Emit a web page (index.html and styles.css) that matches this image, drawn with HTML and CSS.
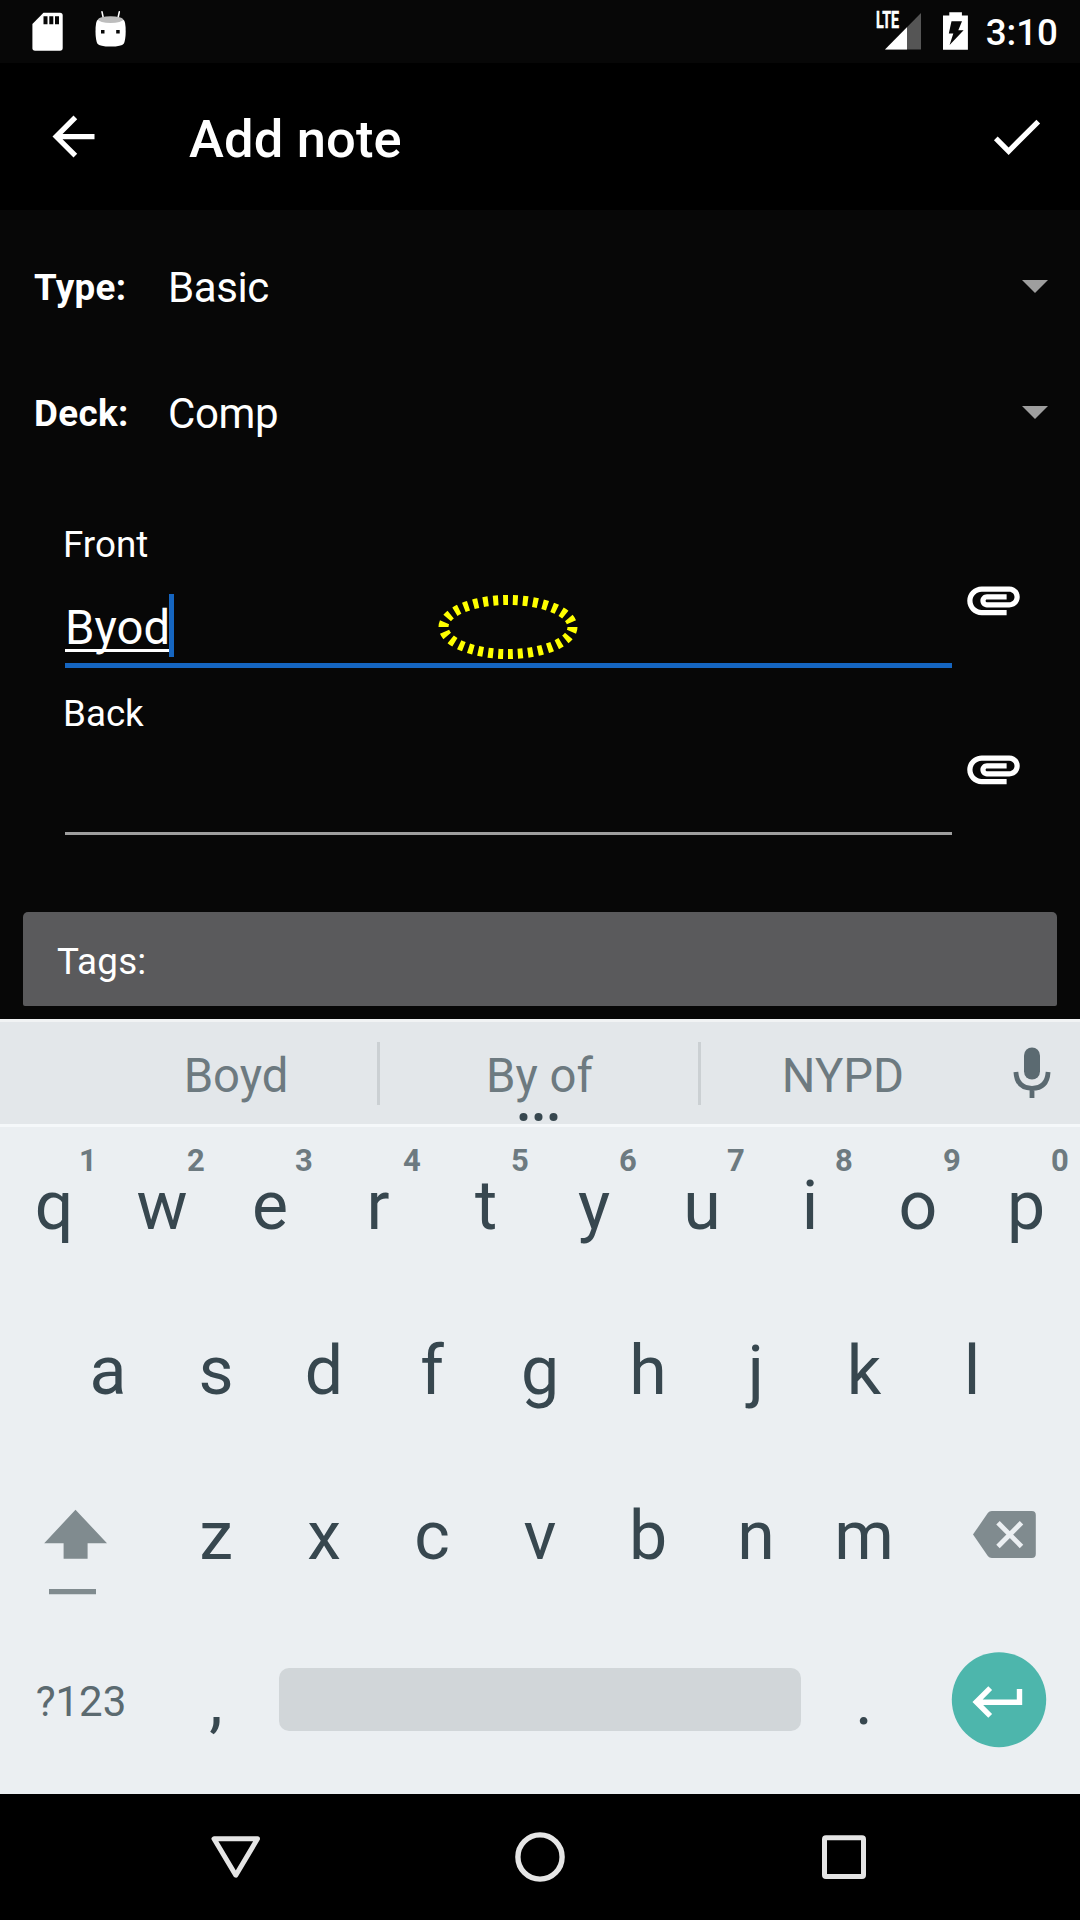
FILE: index.html
```html
<!DOCTYPE html>
<html lang="en">
<head>
<meta charset="utf-8">
<title>Add note</title>
<link rel="stylesheet" href="styles.css">
</head>
<body>
<div class="screen">
  <div class="status">
    <svg class="status-left" width="100" height="63" viewBox="30 0 100 63">
      <path fill="#fff" d="M43.500 12.700H60a2.700 2.700 0 0 1 2.700 2.700V48a2.700 2.700 0 0 1-2.700 2.700H35.100a2.700 2.700 0 0 1-2.700-2.700V24z"/>
      <path fill="#070707" d="M43.500 16.300h4v7.900h-4zM49.300 16.300h4v7.900h-4zM55 16.300h4v7.900h-4z"/>
      <path stroke="#fff" stroke-width="1.600" stroke-linecap="round" d="M102 11.800l1.500 7M119.300 11.800l-1.500 7"/>
      <path fill="#fff" d="M98 19.500q12.600-3 25.200 0q2.600 1 2.500 12.500q-.200 9-2 11.700q-2 2.800-13.100 2.800t-13.100-2.800q-1.800-2.700-2-11.700q-.100-11.500 2.500-12.500z"/>
      <ellipse cx="110.600" cy="19.600" rx="12.500" ry="3.300" fill="#bdbdbd"/>
      <path fill="#070707" d="M101 30h3.500v3.500H101zM116.200 30h3.500v3.500h-3.500z"/>
    </svg>
    <div class="status-right">
      <div class="signal">
        <svg width="46" height="63" viewBox="876 0 46 63">
          <path fill="#555" d="M921 13v36.500h-36z"/>
          <path fill="#fff" d="M907 27.200v22.300h-22z"/>
        </svg>
        <span class="lte">LTE</span>
      </div>
      <svg class="battery" width="25" height="63" viewBox="943 0 25 63">
        <path fill="#fff" d="M943 15.500h6.300v-3.300h12.600v3.300h6v34.200H943z"/>
        <path fill="#070707" d="M951.500 21.200h10.500l-3.700 9.100h5.300l-14 14.800 3.700-11.500h-4.500z"/>
      </svg>
      <span class="clock">3:10</span>
    </div>
  </div>

  <div class="appbar">
    <svg width="63" height="63" viewBox="0 0 24 24"><path fill="#fff" d="M20 11H7.830l5.590-5.590L12 4l-8 8 8 8 1.410-1.410L7.830 13H20v-2z"/></svg>
    <h1 class="title">Add note</h1>
    <svg width="63" height="63" viewBox="0 0 24 24"><path fill="#fff" d="M9 16.170L4.830 12l-1.420 1.410L9 19 21 7l-1.410-1.410z"/></svg>
  </div>

  <div class="form">
    <div class="picker"><b class="picker-label">Type:</b><span class="picker-value">Basic</span><span class="caret"></span></div>
    <div class="picker"><b class="picker-label">Deck:</b><span class="picker-value">Comp</span><span class="caret"></span></div>

    <div class="fields">
      <div class="field">
        <div class="field-main">
          <div class="field-label">Front</div>
          <div class="input focused"><span class="typed">Byod</span><span class="cursor"></span>
            <svg class="marker" width="144" height="70" viewBox="0 0 144 70"><ellipse cx="72" cy="35" rx="64.500" ry="27" fill="none" stroke="#ff0" stroke-width="10" pathLength="300" stroke-dasharray="5 5"/></svg>
          </div>
        </div>
        <svg class="clip" width="63" height="63" viewBox="0 0 24 24"><path fill="#fff" d="M2 12.500C2 9.460 4.460 7 7.500 7H18c2.210 0 4 1.790 4 4s-1.790 4-4 4H9.500C8.120 15 7 13.880 7 12.500S8.120 10 9.500 10H17v2H9.410c-.550 0-.550 1 0 1H18c1.100 0 2-.900 2-2s-.900-2-2-2H7.500C5.570 9 4 10.570 4 12.500S5.570 16 7.500 16H17v2H7.500C4.460 18 2 15.540 2 12.500z"/></svg>
      </div>
      <div class="field">
        <div class="field-main">
          <div class="field-label">Back</div>
          <div class="input"></div>
        </div>
        <svg class="clip" width="63" height="63" viewBox="0 0 24 24"><path fill="#fff" d="M2 12.500C2 9.460 4.460 7 7.500 7H18c2.210 0 4 1.790 4 4s-1.790 4-4 4H9.500C8.120 15 7 13.880 7 12.500S8.120 10 9.500 10H17v2H9.410c-.550 0-.550 1 0 1H18c1.100 0 2-.900 2-2s-.900-2-2-2H7.500C5.570 9 4 10.570 4 12.500S5.570 16 7.500 16H17v2H7.500C4.460 18 2 15.540 2 12.500z"/></svg>
      </div>
    </div>

    <div class="tags">Tags:</div>
  </div>

  <div class="keyboard">
    <div class="suggestions">
      <span class="word">Boyd</span>
      <span class="word center">By of
        <svg class="more" width="40" height="10" viewBox="0 0 40 10"><g fill="#37474f"><circle cx="4.500" cy="5" r="4"/><circle cx="19.500" cy="5" r="4"/><circle cx="34.500" cy="5" r="4"/></g></svg>
      </span>
      <span class="word">NYPD</span>
      <svg class="mic" width="38" height="52" viewBox="0 0 38 52"><rect x="11" y="0.500" width="16" height="32" rx="8" fill="#5b6a71"/><path fill="none" stroke="#5b6a71" stroke-width="4.800" d="M2.900 25q1 16.300 16.100 16.300T35.100 25M19 41v10"/></svg>
    </div>
    <div class="keys">
      <div class="row">
        <span class="key">q<i class="hint">1</i></span><span class="key">w<i class="hint">2</i></span><span class="key">e<i class="hint">3</i></span><span class="key">r<i class="hint">4</i></span><span class="key">t<i class="hint">5</i></span><span class="key">y<i class="hint">6</i></span><span class="key">u<i class="hint">7</i></span><span class="key">i<i class="hint">8</i></span><span class="key">o<i class="hint">9</i></span><span class="key">p<i class="hint">0</i></span>
      </div>
      <div class="row">
        <span class="key">a</span><span class="key">s</span><span class="key">d</span><span class="key">f</span><span class="key">g</span><span class="key">h</span><span class="key">j</span><span class="key">k</span><span class="key">l</span>
      </div>
      <div class="row">
        <svg width="162" height="165" viewBox="0 1457 162 165"><path fill="#808b8f" d="M75.500 1509.800L107 1543.200H87.600v15.600h-24v-15.600H44.200zM49 1589h47v5.200H49z"/></svg>
        <span class="key">z</span><span class="key">x</span><span class="key">c</span><span class="key">v</span><span class="key">b</span><span class="key">n</span><span class="key">m</span>
        <svg width="162" height="165" viewBox="918 1457 162 165"><path fill="#808b8f" d="M973 1534.500l14.800-21.500q1.500-2 4-2h40q4 0 4 4v39q0 4-4 4h-40q-2.500 0-4-2z"/><path stroke="#ebeff2" stroke-width="4.900" d="M998 1522.800l23.500 23.600M1021.500 1522.800l-23.500 23.600"/></svg>
      </div>
      <div class="row">
        <span class="key symbols">?123</span><span class="key">,</span><span class="key space"><span class="spacebar"></span></span><span class="key">.</span>
        <svg width="162" height="165" viewBox="918 1622 162 165"><ellipse cx="999" cy="1699.700" rx="47.200" ry="47.500" fill="#4db6ac"/><path fill="none" stroke="#fff" stroke-width="5.400" d="M990.200 1688.200l-13.900 13.800 13.900 13.800M976 1702.200h43.500v-13.200"/></svg>
      </div>
    </div>
  </div>

  <div class="nav">
    <svg width="304" height="126" viewBox="84.500 1794 304 126"><path fill="none" stroke="#e5e5e5" stroke-width="5" stroke-linejoin="round" d="M214.500 1838.800h43.500l-21.700 36.400z"/></svg>
    <svg width="304" height="126" viewBox="388 1794 304 126"><circle cx="540" cy="1857" r="22.100" fill="none" stroke="#e5e5e5" stroke-width="5.400"/></svg>
    <svg width="304" height="126" viewBox="692 1794 304 126"><rect x="824.500" y="1837.700" width="39" height="38.800" rx="1.500" fill="none" stroke="#e5e5e5" stroke-width="5"/></svg>
  </div>
</div>
</body>
</html>
```
FILE: styles.css
```css
* { box-sizing: border-box; }
body { margin: 0; background: #070707; font-family: Roboto, "Liberation Sans", sans-serif; color: #fff; }
svg { display: block; flex: none; }
.screen { width: 1080px; height: 1920px; display: flex; flex-direction: column; overflow: hidden; }

.status { height: 63px; flex: none; display: flex; justify-content: space-between; padding: 0 22px 0 30px; }
.status-right { display: flex; }
.signal { position: relative; width: 46px; }
.lte { position: absolute; left: 0; top: 8px; font-size: 23px; line-height: 26px; font-weight: 700; -webkit-text-stroke: .5px #fff; transform: scaleX(.62); transform-origin: 0 0; }
.battery { margin-left: 21px; }
.clock { margin-left: 18px; font-size: 36.750px; font-weight: 500; line-height: 66px; }

.appbar { height: 147px; flex: none; background: #000; display: flex; align-items: center; padding: 0 32px 0 42px; }
.title { margin: 5px 0 0 84px; flex: 1; font-size: 52.500px; font-weight: 500; line-height: 63px; letter-spacing: .15px; }

.form { height: 809px; flex: none; padding: 14px 23px 0; }
.picker { height: 126px; display: flex; align-items: center; padding: 0 9px 0 11px; }
.picker-label { width: 134px; font-size: 36.750px; letter-spacing: .35px; }
.picker-value { flex: 1; font-size: 42px; letter-spacing: -.4px; }
.caret { margin-top: -1px; border: 13px solid transparent; border-top-color: #9e9e9e; border-bottom-width: 0; }

.fields { padding: 43px 0 0 42px; }
.field { height: 169px; display: flex; }
.field-main { width: 887px; }
.field-label { font-size: 36.750px; line-height: 52px; margin-left: -2px; }
.input { position: relative; margin-top: 23px; height: 72px; border-bottom: 3px solid #9e9e9e; display: flex; line-height: 69px; font-size: 47.250px; }
.focused { height: 74px; border-bottom: 5px solid #1565c0; }
.typed { height: 58px; border-bottom: 3px solid #fff; }
.cursor { width: 5px; height: 63px; margin-left: -1px; background: #1565c0; }
.marker { position: absolute; left: 371px; top: -2px; }
.clip { margin: 49px 0 0 10px; }

.tags { margin-top: 55px; height: 94px; padding-left: 34px; background: #5a5a5c; border-radius: 5px 5px 2px 2px; font-size: 36.750px; line-height: 99px; letter-spacing: .2px; }

.keyboard { height: 775px; flex: none; background: #ebeff2; }
.suggestions { height: 108px; background: #e3e7ea; border-top: 3px solid #f1f3f4; border-bottom: 3px solid #f5f8fa; display: flex; padding-left: 94px; }
.word { flex: none; width: 284px; height: 102px; font-size: 47.250px; line-height: 109px; text-align: center; color: #6d7a80; }
.center { position: relative; width: 323px; }
.center::before, .center::after { content: ""; position: absolute; top: 20px; width: 3px; height: 63px; background: #cbd0d3; }
.center::before { left: -1px; }
.center::after { right: 0; }
.more { position: absolute; left: 141px; top: 90px; }
.mic { margin: 25px 0 0 28px; }

.row { height: 165px; display: flex; justify-content: center; }
.key { position: relative; width: 108px; height: 165px; font-size: 68px; line-height: 159px; text-align: center; color: #37474f; }
.hint { position: absolute; left: 79px; top: 16px; font: 700 31px/36px Roboto, sans-serif; color: #6d7a80; }
.symbols { width: 162px; font-size: 42px; line-height: 159px; color: #5b6a70; }
.space { width: 540px; display: flex; justify-content: center; padding-top: 46px; }
.spacebar { width: 522px; height: 63px; border-radius: 10px; background: #d1d6d9; }

.nav { flex: 1; background: #000; display: flex; justify-content: center; }
```
